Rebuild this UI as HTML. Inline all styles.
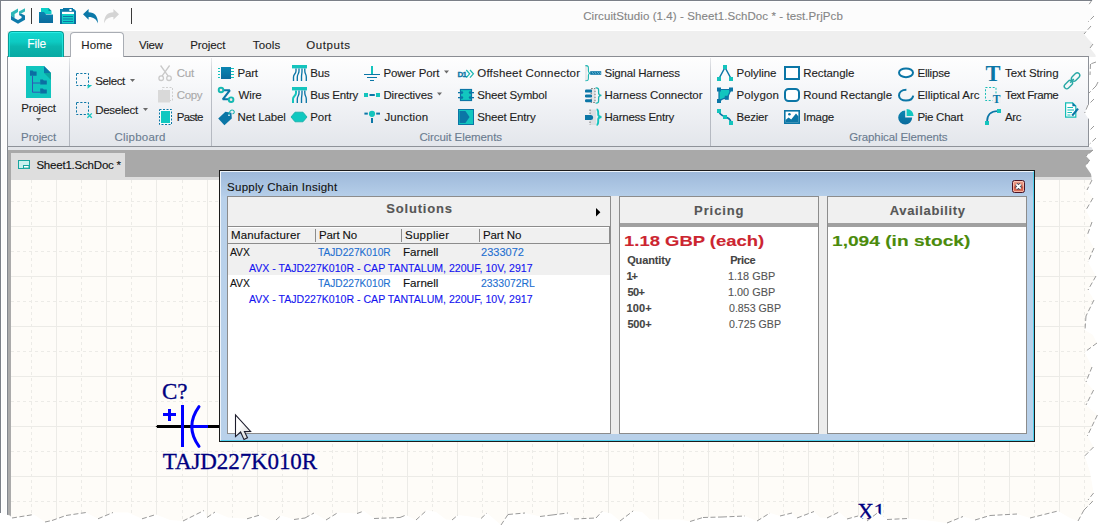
<!DOCTYPE html>
<html lang="en"><head><meta charset="utf-8"><title>CircuitStudio - Supply Chain Insight</title>
<style>
*{box-sizing:border-box;margin:0;padding:0}
html,body{width:1103px;height:528px;overflow:hidden;background:#fff}
body{position:relative;font-family:"Liberation Sans",sans-serif;font-size:11.5px}
.a{position:absolute}
.t{position:absolute;white-space:pre;line-height:30px;font-family:"Liberation Sans",sans-serif;-webkit-text-stroke:0.12px currentColor}
#win{left:0;top:0;width:1103px;height:528px;overflow:hidden}
#bt{left:0;top:0;width:1103px;height:1px;background:#7b8088}
#bl{left:0;top:0;width:1px;height:528px;background:#7b8088}
#titlebar{left:1px;top:1px;width:1102px;height:30px;background:#fcfcfc;border-top:1px solid #fff}
#tabrow{left:7px;top:30px;width:1096px;height:27px;background:linear-gradient(#fff 0,#fff 1px,#efefef 1px,#efefef 100%)}
#lmargin{left:1px;top:31px;width:6px;height:497px;background:#fcfcfc;border-left:1px solid #fff;border-right:1px solid #fff}
#filetab{left:8px;top:31px;width:56px;height:26px;border:1px solid #089c96;border-bottom:0;border-radius:4px 4px 0 0;
 background:linear-gradient(#10d6ce 0,#0dcac2 40%,#0ab6ae 58%,#08aaa3 100%);box-shadow:inset 0 1px 0 #2aeee6,inset 1px 0 0 rgba(42,238,230,.7),inset -1px 0 0 rgba(42,238,230,.7)}
#ribbon{left:7px;top:56px;width:1082px;height:91px;border:1px solid #8e9299;border-top-color:#8a8d93;
 background:linear-gradient(#fefefe 0,#f7f8fa 30%,#eceef2 70%,#e3e6eb 100%)}
#hometab{left:70px;top:32px;width:54px;height:25px;background:#fff;border:1px solid #a9adb4;border-bottom:0;border-radius:4px 4px 0 0}
.sep{width:1px;top:58px;height:88px;background:linear-gradient(rgba(170,175,184,.25),#bcc0c8 25%,#b4b8c0 100%)}
#below{left:8px;top:147px;width:1095px;height:3px;background:#e2e4e8}
#band{left:8px;top:150px;width:1095px;height:30px;background:#a9a9a9}
#lgray{left:7px;top:147px;width:4px;height:381px;background:linear-gradient(to right,#82878e 0,#82878e 1px,#ababab 1px,#ababab 100%)}
#strip{left:11px;top:177px;width:1092px;height:3px;background:#dedede}
#doctab{left:11px;top:153px;width:114px;height:25px;background:#dedede}
#sheet{left:11px;top:180px;width:1092px;height:348px;background:#fefcf8}
/* dialog */
#dlg{left:219px;top:170px;width:816px;height:272px;border:1px solid #1b1b1b;background:linear-gradient(#9db8d9 0,#b4cde8 24px,#b9d1ea 26px,#b9d1ea 100%)}
#dlg .hl{left:0;top:0;width:814px;height:270px;border:1px solid;border-color:#eef4fa #4fd0ee #4fd0ee #eef4fa}
.panel{background:#fff;border:1px solid #8c8c8c}
.phead{left:0;top:0;height:27px;background:#f0f0f0}
.gap{background:#ececec}
#close{left:1012px;top:180px;width:13px;height:13px;border:1px solid #4a1324;border-radius:2.5px;
 background:linear-gradient(#eaa08e 0,#e3826d 48%,#cf4c36 52%,#dd7a66 100%);box-shadow:inset 0 0 0 1px rgba(255,215,200,.65)}

</style></head>
<body>
<div id="win" class="a">
<div id="titlebar" class="a"></div>
<div id="tabrow" class="a"></div>
<div id="lmargin" class="a"></div>
<div id="lgray" class="a"></div>
<div id="below" class="a"></div>
<div id="band" class="a"></div>
<div id="strip" class="a"></div>
<div id="doctab" class="a"></div>
<div id="sheet" class="a"></div>
<svg class="a" style="left:0;top:0" width="1103" height="528" viewBox="0 0 1103 528"><g stroke="#ecebe7" stroke-width="1" shape-rendering="crispEdges"><line x1="31.5" y1="180" x2="31.5" y2="528" stroke-dasharray="3 3"/><line x1="56.5" y1="180" x2="56.5" y2="528"/><line x1="81.5" y1="180" x2="81.5" y2="528" stroke-dasharray="3 3"/><line x1="106.5" y1="180" x2="106.5" y2="528"/><line x1="131.5" y1="180" x2="131.5" y2="528" stroke-dasharray="3 3"/><line x1="156.5" y1="180" x2="156.5" y2="528"/><line x1="182.5" y1="180" x2="182.5" y2="528" stroke-dasharray="3 3"/><line x1="207.5" y1="180" x2="207.5" y2="528"/><line x1="232.5" y1="180" x2="232.5" y2="528" stroke-dasharray="3 3"/><line x1="257.5" y1="180" x2="257.5" y2="528"/><line x1="282.5" y1="180" x2="282.5" y2="528" stroke-dasharray="3 3"/><line x1="307.5" y1="180" x2="307.5" y2="528"/><line x1="332.5" y1="180" x2="332.5" y2="528" stroke-dasharray="3 3"/><line x1="357.5" y1="180" x2="357.5" y2="528"/><line x1="382.5" y1="180" x2="382.5" y2="528" stroke-dasharray="3 3"/><line x1="407.5" y1="180" x2="407.5" y2="528"/><line x1="432.5" y1="180" x2="432.5" y2="528" stroke-dasharray="3 3"/><line x1="457.5" y1="180" x2="457.5" y2="528"/><line x1="482.5" y1="180" x2="482.5" y2="528" stroke-dasharray="3 3"/><line x1="507.5" y1="180" x2="507.5" y2="528"/><line x1="532.5" y1="180" x2="532.5" y2="528" stroke-dasharray="3 3"/><line x1="557.5" y1="180" x2="557.5" y2="528"/><line x1="583.5" y1="180" x2="583.5" y2="528" stroke-dasharray="3 3"/><line x1="608.5" y1="180" x2="608.5" y2="528"/><line x1="633.5" y1="180" x2="633.5" y2="528" stroke-dasharray="3 3"/><line x1="658.5" y1="180" x2="658.5" y2="528"/><line x1="683.5" y1="180" x2="683.5" y2="528" stroke-dasharray="3 3"/><line x1="708.5" y1="180" x2="708.5" y2="528"/><line x1="733.5" y1="180" x2="733.5" y2="528" stroke-dasharray="3 3"/><line x1="758.5" y1="180" x2="758.5" y2="528"/><line x1="783.5" y1="180" x2="783.5" y2="528" stroke-dasharray="3 3"/><line x1="808.5" y1="180" x2="808.5" y2="528"/><line x1="833.5" y1="180" x2="833.5" y2="528" stroke-dasharray="3 3"/><line x1="858.5" y1="180" x2="858.5" y2="528"/><line x1="883.5" y1="180" x2="883.5" y2="528" stroke-dasharray="3 3"/><line x1="908.5" y1="180" x2="908.5" y2="528"/><line x1="933.5" y1="180" x2="933.5" y2="528" stroke-dasharray="3 3"/><line x1="958.5" y1="180" x2="958.5" y2="528"/><line x1="984.5" y1="180" x2="984.5" y2="528" stroke-dasharray="3 3"/><line x1="1009.5" y1="180" x2="1009.5" y2="528"/><line x1="1034.5" y1="180" x2="1034.5" y2="528" stroke-dasharray="3 3"/><line x1="1059.5" y1="180" x2="1059.5" y2="528"/><line x1="1084.5" y1="180" x2="1084.5" y2="528" stroke-dasharray="3 3"/><line x1="11" y1="201.5" x2="1103" y2="201.5" stroke-dasharray="3 3"/><line x1="11" y1="226.5" x2="1103" y2="226.5"/><line x1="11" y1="251.5" x2="1103" y2="251.5" stroke-dasharray="3 3"/><line x1="11" y1="276.5" x2="1103" y2="276.5"/><line x1="11" y1="301.5" x2="1103" y2="301.5" stroke-dasharray="3 3"/><line x1="11" y1="326.5" x2="1103" y2="326.5"/><line x1="11" y1="351.5" x2="1103" y2="351.5" stroke-dasharray="3 3"/><line x1="11" y1="376.5" x2="1103" y2="376.5"/><line x1="11" y1="401.5" x2="1103" y2="401.5" stroke-dasharray="3 3"/><line x1="11" y1="426.5" x2="1103" y2="426.5"/><line x1="11" y1="451.5" x2="1103" y2="451.5" stroke-dasharray="3 3"/><line x1="11" y1="476.5" x2="1103" y2="476.5"/><line x1="11" y1="501.5" x2="1103" y2="501.5" stroke-dasharray="3 3"/><line x1="11" y1="526.5" x2="1103" y2="526.5"/></g></svg>
<div id="ribbon" class="a"></div>
<div id="filetab" class="a"></div>
<div id="hometab" class="a"></div>
<div class="a sep" style="left:69px"></div>
<div class="a sep" style="left:211px"></div>
<div class="a sep" style="left:710px"></div>
<!-- schematic symbol -->
<svg class="a" style="left:0;top:0" width="1103" height="528" viewBox="0 0 1103 528">
 <g shape-rendering="crispEdges">
  <rect x="157" y="425" width="62" height="3" fill="#000"/>
  <rect x="181" y="405" width="3" height="42" fill="#0000ff"/>
  <rect x="192" y="425" width="16" height="3" fill="#0000ff"/>
  <rect x="163" y="413" width="13" height="3" fill="#0000ff"/>
  <rect x="168" y="409" width="3" height="12" fill="#0000ff"/>
 </g>
 <path d="M155.5,426.5 l3,-1.5 v3z" fill="#000"/>
 <path d="M199,406.6 Q184.6,426.5 199,446.4" fill="none" stroke="#0000ff" stroke-width="3" stroke-linecap="round"/>
</svg>
<!-- dialog -->
<div id="dlg" class="a">
 <div class="a hl"></div>
</div>
<div class="a panel" style="left:227px;top:196px;width:384px;height:238px">
 <div class="a phead" style="width:382px;height:30px;border-bottom:1px solid #8c8c8c"></div>
 <div class="a" style="left:0;top:30px;width:382px;height:17px;background:#f0f0f0;border:1px solid #8c8c8c;border-left:0;border-top:0;box-shadow:inset 0 1px 0 #fff"></div>
 <div class="a" style="left:87px;top:32px;width:1px;height:13px;background:#8c8c8c"></div>
 <div class="a" style="left:173px;top:32px;width:1px;height:13px;background:#8c8c8c"></div>
 <div class="a" style="left:251px;top:32px;width:1px;height:13px;background:#8c8c8c"></div>
 <div class="a" style="left:0;top:47px;width:382px;height:31px;background:#f0f0f0"></div>
</div>
<div class="a gap" style="left:611px;top:196px;width:8px;height:238px"></div>
<div class="a panel" style="left:619px;top:196px;width:200px;height:238px">
 <div class="a phead" style="width:198px;height:30px;border-bottom:4px solid #a0a0a0"></div>
</div>
<div class="a gap" style="left:819px;top:196px;width:8px;height:238px"></div>
<div class="a panel" style="left:827px;top:196px;width:200px;height:238px">
 <div class="a phead" style="width:198px;height:30px;border-bottom:4px solid #a0a0a0"></div>
</div>
<div id="close" class="a"></div>
<svg class="a" style="left:0;top:0" width="1103" height="528" viewBox="0 0 1103 528">
<defs><linearGradient id="gb" x1="0" y1="0" x2="0" y2="1"><stop offset="0" stop-color="#0a86b2"/><stop offset="1" stop-color="#0b6a9c"/></linearGradient></defs>
<g><path d="M18,8.6 L18,12 L14.6,14 L14.6,17.8 L11,15.8 L11,12.6Z" fill="#2cb7b8"/><path d="M25,8.2 L25,11.6 L19,14.6 L19,11.4Z" fill="#2cb7b8"/><path d="M11,15.8 L14.6,17.8 L14.6,18.2 L18,20 L21.6,18 L21.6,16.4 L19,15 L19,14.6 L21,13.4 L25,15.6 L25,19.8 L18,23.8 L11,19.8Z" fill="#0d7aaa"/></g>
<rect x="31" y="8" width="1" height="16" fill="#3a3a3a" shape-rendering="crispEdges"/>
<rect x="131" y="8" width="1" height="16" fill="#3a3a3a" shape-rendering="crispEdges"/>
<path d="M41,8 H48.5 L51.5,11 V14 H41Z" fill="#0ccfc8"/><path d="M48.5,8 L51.5,11 H48.5Z" fill="#0b8f9a"/><path d="M39,12 H44 L46,14.5 H53 V23 H39Z" fill="url(#gb)"/>
<path d="M60,9 H74 L76,11 V24 H60Z" fill="url(#gb)"/><rect x="63" y="8" width="10" height="4" fill="#0b76a6"/><rect x="62" y="11.8" width="12" height="2.2" fill="#fff"/><rect x="69.4" y="9" width="2.2" height="2" fill="#fff"/><rect x="62" y="14" width="12" height="9.5" fill="#10cfc7"/><g fill="#0b76a6"><rect x="63" y="16" width="10" height="1"/><rect x="63" y="18.5" width="10" height="1"/><rect x="63" y="21" width="10" height="1"/></g>
<path d="M83,14.3 L88.6,9 V12.2 C94.5,12.2 98,16 98,23.6 C96.5,19.2 93.6,17 88.6,17 V19.8Z" fill="#0b78a8"/>
<path d="M119,14.3 L113.4,9 V12.2 C107.5,12.2 104,16 104,23.6 C105.5,19.2 108.4,17 113.4,17 V19.8Z" fill="#d4d4d4"/>
<path d="M26,66 H44 L51,73 V98 H26Z" fill="#10c5be"/><path d="M44,66 L51,73 H44Z" fill="#0b7aa8"/><path d="M44,73 H51 V80Z" fill="#0aa7a0"/>
<path d="M30,70.6 h2.6 l1,1 h3 v4.2 h-6.6Z" fill="#0b6fa2"/><path d="M40.2,79.4 h2.6 l1,1 h3 v4.2 h-6.6Z" fill="#0b6fa2"/><path d="M40.2,88.4 h2.6 l1,1 h3 v4.2 h-6.6Z" fill="#0b6fa2"/>
<path d="M32.5,76 V92.2 H40 M32.5,83 H40" fill="none" stroke="#2f58b5" stroke-width="1"/>
<path d="M36,118 h5 l-2.5,3Z" fill="#6a6a6a"/><path d="M130,79 h5 l-2.5,3Z" fill="#6a6a6a"/><path d="M143,108 h5 l-2.5,3Z" fill="#6a6a6a"/><path d="M444,70.5 h5 l-2.5,3Z" fill="#6a6a6a"/><path d="M437,92.5 h5 l-2.5,3Z" fill="#6a6a6a"/>
<rect x="76.5" y="73.5" width="12" height="12" fill="none" stroke="#0b76a6" stroke-width="1" stroke-dasharray="2.2 1.6"/><path d="M87.6,85 h4.6 l-4.6,3.8Z" fill="#14c4bd"/>
<rect x="76.5" y="102.5" width="12" height="12" fill="none" stroke="#0b76a6" stroke-width="1" stroke-dasharray="2.2 1.6"/><path d="M87.4,113.4 l4.4,4.4 M91.8,113.4 l-4.4,4.4" stroke="#14c4bd" stroke-width="1.3" fill="none"/>
<g fill="none" stroke="#c9c9c9" stroke-width="1.3"><path d="M160.6,65.5 L168.2,76.2 M169.6,65.5 L162,76.2"/><circle cx="161.2" cy="78.2" r="2.3"/><circle cx="169" cy="78.2" r="2.3"/></g>
<rect x="162.5" y="87.5" width="10" height="13" fill="none" stroke="#cfcfcf" stroke-dasharray="2 1.5"/><rect x="158" y="90" width="12" height="12.5" fill="#d9d9d9"/>
<rect x="159.5" y="109.5" width="12" height="15" fill="#f4fbfb" stroke="#0b76a6" stroke-dasharray="2 1.5"/><rect x="161" y="111" width="9" height="12" fill="#10c8c0"/>
<rect x="221" y="67" width="10" height="12" fill="url(#gb)"/><g fill="#14c4bd" shape-rendering="crispEdges"><rect x="218" y="68" width="2" height="1"/><rect x="231" y="68" width="3" height="1"/><rect x="218" y="71" width="2" height="1"/><rect x="231" y="71" width="3" height="1"/><rect x="218" y="74" width="2" height="1"/><rect x="231" y="74" width="3" height="1"/><rect x="218" y="77" width="2" height="1"/><rect x="231" y="77" width="3" height="1"/></g>
<path d="M223.2,90.3 H229.8 L222.8,99.3 H228.8" fill="none" stroke="#0b76a6" stroke-width="2.1" stroke-linejoin="bevel"/><circle cx="221" cy="90" r="2.3" fill="#f6e4e4" stroke="#13b9b2" stroke-width="1.9"/><circle cx="231.1" cy="99.7" r="2.3" fill="#f6e4e4" stroke="#13b9b2" stroke-width="1.9"/>
<path d="M218.2,118.6 L225.4,111.8 L231.4,112.8 L231.8,118.4 L224.4,125.2Z" fill="#0b76a6"/><circle cx="229" cy="115.2" r="0.9" fill="#dfeef5"/><path d="M229.2,114.6 C228.6,111.4 231.4,109.2 233.4,110.4 C235,111.6 234.2,113.8 232.4,113.8" fill="none" stroke="#19b5b0" stroke-width="1.1"/>
<rect x="292" y="65" width="15" height="3.4" fill="#14c4bd"/><g fill="none" stroke="#0b76a6" stroke-width="1.35"><path d="M296,68.4 V71 C296,74 293.5,74 293.5,77 V81"/><path d="M299,68.4 V71 C299,74 297.3,74 297.3,77 V81"/><path d="M302,68.4 V71 C302,74 301.5,74 301.5,77 V81"/><path d="M304.8,68.4 V71 C304.8,74 306.3,74 306.3,77 V81"/></g><rect x="292" y="87" width="15" height="3.4" fill="#14c4bd"/><g fill="none" stroke="#0b76a6" stroke-width="1.35"><path d="M299,90.4 V93 C299,96 297.3,96 297.3,99 V103"/><path d="M302,90.4 V93 C302,96 301.5,96 301.5,99 V103"/><path d="M304.8,90.4 V93 C304.8,96 306.3,96 306.3,99 V103"/></g><path d="M296,90.4 V93 C296,96 293,96 293,99 V103" fill="none" stroke="#14c4bd" stroke-width="2"/>
<path d="M291,117 L295,112.2 H303 L307,117 L303,121.8 H295Z" fill="#10c8c0" stroke="#12aca6" stroke-width=".8"/>
<rect x="371" y="66" width="2" height="8" fill="#14c4bd"/><g fill="#0b76a6" shape-rendering="crispEdges"><rect x="364" y="74" width="16" height="1.4"/><rect x="367" y="77" width="10" height="1"/><rect x="370" y="80" width="4" height="1"/></g>
<rect x="364" y="93" width="4" height="4" fill="#14c4bd"/><rect x="376" y="93" width="4" height="4" fill="#14c4bd"/><rect x="369.5" y="94" width="5.3" height="2" fill="#0b76a6"/>
<rect x="364.4" y="112.6" width="3.4" height="2" fill="#0b76a6"/><rect x="376.2" y="112.6" width="3.8" height="2" fill="#0b76a6"/><rect x="371" y="118" width="2" height="5" fill="#0b76a6"/><circle cx="372" cy="113.8" r="3.1" fill="#14c4bd"/>
<text x="457.4" y="76.8" font-family="Liberation Sans" font-weight="bold" font-size="8" fill="#0b76a6" stroke="#0b76a6" stroke-width=".3" letter-spacing="-0.7">D1</text><path d="M466.3,70 L469.6,73.8 L466.3,77.6 M470,70 L473.4,73.8 L470,77.6" fill="none" stroke="#19b5b0" stroke-width="1.2"/>
<rect x="460.5" y="89.5" width="11" height="11" fill="#12c6bf" stroke="#0b76a6" stroke-width="1.2"/><g fill="#0b76a6"><rect x="458" y="92" width="2.5" height="1.3"/><rect x="458" y="97" width="2.5" height="1.3"/><rect x="471.5" y="92" width="2.5" height="1.3"/><rect x="471.5" y="97" width="2.5" height="1.3"/><circle cx="461.8" cy="92.6" r="1.4"/><circle cx="461.8" cy="97.6" r="1.4"/><circle cx="470.2" cy="92.6" r="1.4"/><circle cx="470.2" cy="97.6" r="1.4"/></g>
<rect x="458.5" y="109.5" width="15" height="15" fill="#12c6bf" stroke="#0b76a6" stroke-width="1"/><path d="M459.5,111 H465.4 L469.6,117 L465.4,123 H459.5Z" fill="#0b76a6"/>
<path d="M585,65.6 h2.2 v15 h-2.2z" fill="#e6e8ea"/><path d="M585.4,65.6 C588.6,65.4 588.4,67 588.4,69 V71 C588.4,72.4 589,73 590.2,73.2 C589,73.4 588.4,74 588.4,75.4 V77.4 C588.4,79.6 588.6,80.8 585.4,80.8" fill="none" stroke="#19b5b0" stroke-width="1.1"/><rect x="590.2" y="71.2" width="11" height="3.6" fill="#0b76a6"/><path d="M592,72 l1.6,2 M594.6,72 l1.6,2 M597.2,72 l1.6,2 M599.6,72 l1.4,2" stroke="#7fc4dc" stroke-width=".9"/>
<rect x="591.2" y="88.5" width="3.8" height="14" fill="#e2e4e6" stroke="#555" stroke-width=".8" stroke-dasharray="1.5 1.5"/><g fill="#0b76a6"><rect x="585" y="89.6" width="7" height="3" rx="1.2"/><rect x="585" y="94.4" width="7" height="3" rx="1.2"/><rect x="585" y="99.2" width="7" height="3" rx="1.2"/></g><path d="M595.6,87.8 C598.8,87.6 598.6,89.4 598.6,91.4 V93 C598.6,94.6 599.6,95.2 601.4,95.4 C599.6,95.6 598.6,96.2 598.6,97.8 V99.6 C598.6,101.8 598.8,103.2 595.6,103.2" fill="none" stroke="#19b5b0" stroke-width="1.3"/>
<rect x="590" y="109.5" width="6" height="15.5" fill="#dddfe2"/><path d="M590,109.5 V125" stroke="#555" stroke-width=".8" stroke-dasharray="1.5 1.5"/><path d="M585,115 h5.6 a2.5,2.5 0 0 1 0,5 h-5.6z" fill="#0b76a6"/><path d="M596.6,109.4 C598.2,109.6 598.2,110.8 598.2,112.6 V114.6 C598.2,116.2 599.6,116.8 601.4,117 C599.6,117.2 598.2,117.8 598.2,119.4 V121.6 C598.2,123.6 598.2,124.8 596.6,125" fill="none" stroke="#14c4bd" stroke-width="1.9"/>
<path d="M719,78.5 L725,67.5 L731,78.5" fill="none" stroke="#0b76a6" stroke-width="1.5"/><rect x="723" y="65" width="4" height="4" fill="#14c4bd"/><rect x="717" y="77" width="4" height="4" fill="#14c4bd"/><rect x="729" y="77" width="4" height="4" fill="#14c4bd"/>
<path d="M719,89.5 H731 L727.4,97.6 C724,98 721,99.4 719,101.4Z" fill="#12c6bf" stroke="#0b76a6" stroke-width="1.2"/><rect x="717" y="87.5" width="4" height="4" fill="#0b76a6"/><rect x="729" y="87.5" width="4" height="4" fill="#0b76a6"/><rect x="717" y="99" width="4" height="4" fill="#0b76a6"/><rect x="724.8" y="95.8" width="4" height="4" fill="#0b76a6"/>
<path d="M719,111 C719,118 731,115 731,123" fill="none" stroke="#0b76a6" stroke-width="1.6"/><rect x="717" y="109" width="4" height="4" fill="#14c4bd"/><rect x="723" y="115" width="4" height="4" fill="#14c4bd"/><rect x="729" y="121" width="4" height="4" fill="#14c4bd"/>
<rect x="785" y="67" width="14" height="12" fill="#fff" stroke="#0b76a6" stroke-width="2"/>
<rect x="785" y="89" width="14" height="12" rx="3.5" fill="#fff" stroke="#0b76a6" stroke-width="2"/>
<rect x="784.8" y="110.8" width="14.4" height="12.4" fill="#fff" stroke="#0b76a6" stroke-width="1.6"/><path d="M785.5,122.6 V120 L788.6,117.6 L791.2,119.6 L796,113.6 L798.5,116.4 V122.6Z" fill="#0b76a6"/><circle cx="789.4" cy="114.2" r="1.3" fill="#0b76a6"/>
<ellipse cx="906" cy="72.8" rx="7" ry="4.4" fill="#fff" stroke="#0b76a6" stroke-width="2"/>
<path d="M906.4,89.8 C901.6,89.8 899,92.6 899,95.6 C899,98.6 902,100.6 906,100.6 C910,100.6 912.8,98.6 913.2,95.6" fill="none" stroke="#0b76a6" stroke-width="2"/>
<path d="M905.2,110.6 A7,7 0 1 0 912.2,117.6 H905.2Z" fill="url(#gb)"/><path d="M906.6,109 A7,7 0 0 1 913.6,116 H906.6Z" fill="#12c6bf"/>
<text x="985.6" y="81" font-family="Liberation Serif" font-weight="bold" font-size="22.5" fill="#0b76a6">T</text>
<rect x="985.5" y="87.5" width="10.5" height="13" fill="none" stroke="#19bdb6" stroke-width="1" stroke-dasharray="2 1.6"/><rect x="992.4" y="94.4" width="8.6" height="9" fill="#eef0f3"/><text x="992.8" y="103" font-family="Liberation Serif" font-weight="bold" font-size="11.5" fill="#0b76a6">T</text>
<path d="M987,122 Q987,111 998,111" fill="none" stroke="#0b76a6" stroke-width="1.7"/><rect x="997" y="109" width="4" height="4" fill="#14c4bd"/><rect x="985" y="121" width="4" height="4" fill="#14c4bd"/>
<g fill="none" stroke="#2aa9a6" stroke-width="1.4"><rect x="-4.8" y="-2.5" width="9.6" height="5" rx="2.5" transform="translate(1075.6,77) rotate(-45)"/><rect x="-4.8" y="-2.5" width="9.6" height="5" rx="2.5" transform="translate(1068.4,84.6) rotate(-45)"/><path d="M1070.2,82.8 L1073.8,79" stroke-width="1.6"/></g>
<path d="M1065.6,102.8 H1072.6 L1075.8,106 V117.2 H1065.6Z" fill="#fff" stroke="#14bdb6" stroke-width="1.2"/><path d="M1072.4,102.4 L1076.2,106.2 H1072.4Z" fill="#0b76a6"/><g stroke="#14bdb6" stroke-width="1"><path d="M1067.4,107.5 H1073 M1067.4,110 H1074 M1067.4,112.5 H1072 M1067.4,115 H1070.5"/></g><path d="M1078,108.6 L1072.2,115.6" stroke="#0b76a6" stroke-width="2.2"/>
<rect x="18.5" y="160.5" width="11" height="8" fill="#c9f0ee" stroke="#17a59f" stroke-width="1"/><rect x="23.5" y="165.5" width="5.5" height="2.6" fill="#fff" stroke="#17a59f" stroke-width="1"/>
<path d="M596,208 L600.4,212.2 L596,216.4Z" fill="#000"/>
<path d="M1016.3,184.4 L1020.7,188.6 M1020.7,184.4 L1016.3,188.6" stroke="#454a58" stroke-width="3.6" stroke-linecap="butt"/><path d="M1016.3,184.4 L1020.7,188.6 M1020.7,184.4 L1016.3,188.6" stroke="#fff" stroke-width="1.9" stroke-linecap="butt"/>
<defs><linearGradient id="gc" x1="0" y1="0" x2="1" y2="1"><stop offset="0.35" stop-color="#fff"/><stop offset="1" stop-color="#cfcfcf"/></linearGradient></defs><path d="M235.5,415 L235.5,436.6 L240.6,432 L244,439.6 L247.5,437.8 L244.4,431.6 L250.6,431.4Z" fill="url(#gc)" stroke="#1c1c2c" stroke-width="1.1" stroke-linejoin="miter"/>
</svg>
<span class="t" style="left:583.2px;top:1px;font-size:11.5px;color:#858585;letter-spacing:0.080px;">CircuitStudio (1.4) - Sheet1.SchDoc * - test.PrjPcb</span>
<span class="t" style="left:27.3px;top:29px;font-size:12px;color:#ffffff;letter-spacing:-0.133px;">File</span>
<span class="t" style="left:81.2px;top:30px;font-size:11.5px;color:#1e1e1e;letter-spacing:0.133px;">Home</span>
<span class="t" style="left:139.0px;top:30px;font-size:11.5px;color:#1e1e1e;letter-spacing:-0.200px;">View</span>
<span class="t" style="left:190.2px;top:30px;font-size:11.5px;color:#1e1e1e;letter-spacing:-0.100px;">Project</span>
<span class="t" style="left:252.8px;top:30px;font-size:11.5px;color:#1e1e1e;letter-spacing:0.125px;">Tools</span>
<span class="t" style="left:306.2px;top:30px;font-size:11.5px;color:#1e1e1e;letter-spacing:0.583px;">Outputs</span>
<span class="t" style="left:21.3px;top:93px;font-size:11.5px;color:#1e1e1e;letter-spacing:-0.200px;">Project</span>
<span class="t" style="left:95.2px;top:66px;font-size:11.5px;color:#1e1e1e;letter-spacing:-0.380px;">Select</span>
<span class="t" style="left:95.2px;top:95px;font-size:11.5px;color:#1e1e1e;letter-spacing:-0.257px;">Deselect</span>
<span class="t" style="left:176.8px;top:58px;font-size:11.5px;color:#a9a9a9;letter-spacing:-0.250px;">Cut</span>
<span class="t" style="left:176.8px;top:80px;font-size:11.5px;color:#a9a9a9;letter-spacing:-0.400px;">Copy</span>
<span class="t" style="left:176.8px;top:102px;font-size:11.5px;color:#1e1e1e;letter-spacing:-0.675px;">Paste</span>
<span class="t" style="left:237.6px;top:58px;font-size:11.5px;color:#1e1e1e;letter-spacing:-0.267px;">Part</span>
<span class="t" style="left:238.6px;top:80px;font-size:11.5px;color:#1e1e1e;letter-spacing:-0.167px;">Wire</span>
<span class="t" style="left:237.6px;top:102px;font-size:11.5px;color:#1e1e1e;letter-spacing:-0.138px;">Net Label</span>
<span class="t" style="left:310.2px;top:58px;font-size:11.5px;color:#1e1e1e;letter-spacing:-0.100px;">Bus</span>
<span class="t" style="left:310.2px;top:80px;font-size:11.5px;color:#1e1e1e;letter-spacing:-0.212px;">Bus Entry</span>
<span class="t" style="left:310.2px;top:102px;font-size:11.5px;color:#1e1e1e;letter-spacing:0.000px;">Port</span>
<span class="t" style="left:383.4px;top:58px;font-size:11.5px;color:#1e1e1e;letter-spacing:-0.089px;">Power Port</span>
<span class="t" style="left:383.4px;top:80px;font-size:11.5px;color:#1e1e1e;letter-spacing:-0.133px;">Directives</span>
<span class="t" style="left:384.4px;top:102px;font-size:11.5px;color:#1e1e1e;letter-spacing:0.129px;">Junction</span>
<span class="t" style="left:477.3px;top:58px;font-size:11.5px;color:#1e1e1e;letter-spacing:0.188px;">Offsheet Connector</span>
<span class="t" style="left:477.3px;top:80px;font-size:11.5px;color:#1e1e1e;letter-spacing:-0.164px;">Sheet Symbol</span>
<span class="t" style="left:477.3px;top:102px;font-size:11.5px;color:#1e1e1e;letter-spacing:-0.170px;">Sheet Entry</span>
<span class="t" style="left:604.5px;top:58px;font-size:11.5px;color:#1e1e1e;letter-spacing:-0.200px;">Signal Harness</span>
<span class="t" style="left:604.5px;top:80px;font-size:11.5px;color:#1e1e1e;letter-spacing:-0.069px;">Harness Connector</span>
<span class="t" style="left:604.5px;top:102px;font-size:11.5px;color:#1e1e1e;letter-spacing:-0.258px;">Harness Entry</span>
<span class="t" style="left:736.5px;top:58px;font-size:11.5px;color:#1e1e1e;letter-spacing:-0.043px;">Polyline</span>
<span class="t" style="left:736.5px;top:80px;font-size:11.5px;color:#1e1e1e;letter-spacing:0.133px;">Polygon</span>
<span class="t" style="left:736.5px;top:102px;font-size:11.5px;color:#1e1e1e;letter-spacing:-0.200px;">Bezier</span>
<span class="t" style="left:803.3px;top:58px;font-size:11.5px;color:#1e1e1e;letter-spacing:-0.100px;">Rectangle</span>
<span class="t" style="left:803.3px;top:80px;font-size:11.5px;color:#1e1e1e;letter-spacing:-0.007px;">Round Rectangle</span>
<span class="t" style="left:803.3px;top:102px;font-size:11.5px;color:#1e1e1e;letter-spacing:-0.275px;">Image</span>
<span class="t" style="left:917.4px;top:58px;font-size:11.5px;color:#1e1e1e;letter-spacing:-0.183px;">Ellipse</span>
<span class="t" style="left:917.4px;top:80px;font-size:11.5px;color:#1e1e1e;letter-spacing:0.015px;">Elliptical Arc</span>
<span class="t" style="left:917.4px;top:102px;font-size:11.5px;color:#1e1e1e;letter-spacing:-0.275px;">Pie Chart</span>
<span class="t" style="left:1005.1px;top:58px;font-size:11.5px;color:#1e1e1e;letter-spacing:-0.090px;">Text String</span>
<span class="t" style="left:1005.1px;top:80px;font-size:11.5px;color:#1e1e1e;letter-spacing:-0.433px;">Text Frame</span>
<span class="t" style="left:1005.1px;top:102px;font-size:11.5px;color:#1e1e1e;letter-spacing:-0.450px;">Arc</span>
<span class="t" style="left:21.1px;top:122px;font-size:11.5px;color:#6b7c90;letter-spacing:-0.117px;">Project</span>
<span class="t" style="left:114.4px;top:122px;font-size:11.5px;color:#6b7c90;letter-spacing:0.238px;">Clipboard</span>
<span class="t" style="left:419.4px;top:122px;font-size:11.5px;color:#6b7c90;letter-spacing:-0.073px;">Circuit Elements</span>
<span class="t" style="left:849.3px;top:122px;font-size:11.5px;color:#6b7c90;letter-spacing:-0.124px;">Graphical Elements</span>
<span class="t" style="left:36.4px;top:150px;font-size:11.5px;color:#111111;letter-spacing:-0.207px;">Sheet1.SchDoc *</span>
<span class="t" style="left:227.1px;top:172px;font-size:11.5px;color:#111111;letter-spacing:0.242px;">Supply Chain Insight</span>
<span class="t" style="left:386.3px;top:194px;font-size:13px;color:#565656;letter-spacing:0.800px;font-weight:bold;">Solutions</span>
<span class="t" style="left:694.1px;top:196px;font-size:13px;color:#565656;letter-spacing:0.900px;font-weight:bold;">Pricing</span>
<span class="t" style="left:889.8px;top:196px;font-size:13px;color:#565656;letter-spacing:0.636px;font-weight:bold;">Availability</span>
<span class="t" style="left:231.0px;top:220px;font-size:11.5px;color:#111;letter-spacing:0.145px;">Manufacturer</span>
<span class="t" style="left:319.1px;top:220px;font-size:11.5px;color:#111;letter-spacing:-0.167px;">Part No</span>
<span class="t" style="left:405.0px;top:220px;font-size:11.5px;color:#111;letter-spacing:0.257px;">Supplier</span>
<span class="t" style="left:482.9px;top:220px;font-size:11.5px;color:#111;letter-spacing:-0.067px;">Part No</span>
<span class="t" style="left:229.6px;top:237px;font-size:11px;color:#111;transform:scaleX(0.9381);transform-origin:0 0;">AVX</span>
<span class="t" style="left:318.2px;top:237px;font-size:11px;color:#1e6fd0;transform:scaleX(0.9231);transform-origin:0 0;">TAJD227K010R</span>
<span class="t" style="left:402.5px;top:237px;font-size:11px;color:#111;transform:scaleX(1.0531);transform-origin:0 0;">Farnell</span>
<span class="t" style="left:480.8px;top:237px;font-size:11px;color:#1e6fd0;transform:scaleX(1.0024);transform-origin:0 0;">2333072</span>
<span class="t" style="left:248.6px;top:253px;font-size:11px;color:#1414f0;transform:scaleX(0.9603);transform-origin:0 0;">AVX - TAJD227K010R - CAP TANTALUM, 220UF, 10V, 2917</span>
<span class="t" style="left:229.6px;top:268px;font-size:11px;color:#111;transform:scaleX(0.9381);transform-origin:0 0;">AVX</span>
<span class="t" style="left:318.2px;top:268px;font-size:11px;color:#1e6fd0;transform:scaleX(0.9231);transform-origin:0 0;">TAJD227K010R</span>
<span class="t" style="left:402.5px;top:268px;font-size:11px;color:#111;transform:scaleX(1.0531);transform-origin:0 0;">Farnell</span>
<span class="t" style="left:480.9px;top:268px;font-size:11px;color:#1e6fd0;transform:scaleX(0.9464);transform-origin:0 0;">2333072RL</span>
<span class="t" style="left:248.6px;top:284px;font-size:11px;color:#1414f0;transform:scaleX(0.9603);transform-origin:0 0;">AVX - TAJD227K010R - CAP TANTALUM, 220UF, 10V, 2917</span>
<span class="t" style="left:623.8px;top:226px;font-size:15.5px;color:#cc2530;transform:scaleX(1.1905);transform-origin:0 0;font-weight:bold;">1.18 GBP (each)</span>
<span class="t" style="left:831.6px;top:226px;font-size:15.5px;color:#4b8b0b;transform:scaleX(1.2355);transform-origin:0 0;font-weight:bold;">1,094 (in stock)</span>
<span class="t" style="left:627.2px;top:245px;font-size:11px;color:#444;letter-spacing:-0.129px;font-weight:bold;">Quantity</span>
<span class="t" style="left:730.2px;top:245px;font-size:11px;color:#444;letter-spacing:-0.400px;font-weight:bold;">Price</span>
<span class="t" style="left:626.4px;top:261px;font-size:11px;color:#444;letter-spacing:-0.900px;font-weight:bold;">1+</span>
<span class="t" style="left:728.4px;top:261px;font-size:11px;color:#555;transform:scaleX(0.9891);transform-origin:0 0;">1.18 GBP</span>
<span class="t" style="left:627.4px;top:277px;font-size:11px;color:#444;letter-spacing:-0.550px;font-weight:bold;">50+</span>
<span class="t" style="left:728.4px;top:277px;font-size:11px;color:#555;transform:scaleX(0.9891);transform-origin:0 0;">1.00 GBP</span>
<span class="t" style="left:626.4px;top:293px;font-size:11px;color:#444;letter-spacing:0.133px;font-weight:bold;">100+</span>
<span class="t" style="left:729.4px;top:293px;font-size:11px;color:#555;transform:scaleX(0.9660);transform-origin:0 0;">0.853 GBP</span>
<span class="t" style="left:627.4px;top:309px;font-size:11px;color:#444;letter-spacing:-0.200px;font-weight:bold;">500+</span>
<span class="t" style="left:729.4px;top:309px;font-size:11px;color:#555;transform:scaleX(0.9660);transform-origin:0 0;">0.725 GBP</span>
<span class="t" style="left:162.0px;top:377px;font-size:23px;color:#000080;letter-spacing:-0.200px;font-family:'Liberation Serif',serif;-webkit-text-stroke:0.3px currentColor;">C?</span>
<span class="t" style="left:162.8px;top:447px;font-size:23px;color:#000080;letter-spacing:-0.091px;font-family:'Liberation Serif',serif;-webkit-text-stroke:0.3px currentColor;">TAJD227K010R</span>
<span class="t" style="left:857.2px;top:497px;font-size:23px;color:#000080;letter-spacing:-0.400px;font-family:'Liberation Serif',serif;-webkit-text-stroke:0.3px currentColor;">X1</span>
<svg class="a" style="left:0;top:0" width="1103" height="528" viewBox="0 0 1103 528">
<polygon fill="#ffffff" points="0,528 0,513 10,515.5 12,518 34,514.5 45,522 52,520.5 66,515.5 86,512.5 98,518.8 113,512.5 128,512.5 142,518.8 156,514.5 170,520 183,521 204,510.5 207,517.5 215,512 228,517.5 247,518.8 260,515 270,520 276,520 281,515.5 294,519.5 305,518 314,513 326,520 338,512.5 357,513.5 364,511 374,518.5 400,517.5 406,515 416,520 427,510 436,512 446,519.5 452,520 458,515 470,516.5 481,518.5 487,513 501,525 508,514.5 525,513 540,516.5 552,515 568,513 574,519 596,518 602,511.5 611,513.5 620,521 633,511 642,512 650,519.5 680,519.5 690,521.5 703,517.5 722,517 745,516 757,521 770,513 780,516 792,513 797,518 814,511.5 820,517.5 827,518 839,512 847,519 858,516 867,521 878,512.5 887,519.5 908,518.5 928,520.5 947,523 963,516.5 975,520 990,515.5 1017,514 1030,518 1058,511 1070,518 1078,521 1084,510 1094,500 1088,500 1093.6,493 1090,472 1084.7,456 1093.6,447 1087.3,436 1097.4,415 1086,405 1093.6,390 1086,382 1092,367 1084.7,352 1097,343 1093,335 1085,330 1086,316 1094,300 1088,290 1096,276 1088,262 1094,248 1087,236 1092,222 1086,210 1093,198 1087,190 1092,180 1091,174 1085.5,166 1089.7,160 1086,156 1093,150 1089.7,144 1096,138 1089,131 1094,126 1088,118 1084.7,113 1088,105 1094,99 1089,93 1096,86 1098,82 1090,75 1090.5,64 1096,62 1095.5,55 1090,48 1093,44 1089,40 1084,34 1091,26 1088,22 1094,16 1092,10 1088,6 1092,0 1103,0 1103,528"/><g stroke="#8e8e8e" stroke-width="0.9" stroke-dasharray="5 2.5" fill="none"><line x1="12" y1="518" x2="34" y2="514.5"/><line x1="45" y1="522" x2="52" y2="520.5"/><line x1="52" y1="520.5" x2="66" y2="515.5"/><line x1="66" y1="515.5" x2="86" y2="512.5"/><line x1="98" y1="518.8" x2="113" y2="512.5"/><line x1="142" y1="518.8" x2="156" y2="514.5"/><line x1="183" y1="521" x2="204" y2="510.5"/><line x1="207" y1="517.5" x2="215" y2="512"/><line x1="247" y1="518.8" x2="260" y2="515"/><line x1="276" y1="520" x2="281" y2="515.5"/><line x1="294" y1="519.5" x2="305" y2="518"/><line x1="305" y1="518" x2="314" y2="513"/><line x1="326" y1="520" x2="338" y2="512.5"/><line x1="357" y1="513.5" x2="364" y2="511"/><line x1="374" y1="518.5" x2="400" y2="517.5"/><line x1="400" y1="517.5" x2="406" y2="515"/><line x1="416" y1="520" x2="427" y2="510"/><line x1="452" y1="520" x2="458" y2="515"/><line x1="481" y1="518.5" x2="487" y2="513"/><line x1="501" y1="525" x2="508" y2="514.5"/><line x1="508" y1="514.5" x2="525" y2="513"/><line x1="540" y1="516.5" x2="552" y2="515"/><line x1="552" y1="515" x2="568" y2="513"/><line x1="574" y1="519" x2="596" y2="518"/><line x1="596" y1="518" x2="602" y2="511.5"/><line x1="620" y1="521" x2="633" y2="511"/><line x1="690" y1="521.5" x2="703" y2="517.5"/><line x1="703" y1="517.5" x2="722" y2="517"/><line x1="722" y1="517" x2="745" y2="516"/><line x1="757" y1="521" x2="770" y2="513"/><line x1="780" y1="516" x2="792" y2="513"/><line x1="797" y1="518" x2="814" y2="511.5"/><line x1="827" y1="518" x2="839" y2="512"/><line x1="847" y1="519" x2="858" y2="516"/><line x1="867" y1="521" x2="878" y2="512.5"/><line x1="887" y1="519.5" x2="908" y2="518.5"/><line x1="947" y1="523" x2="963" y2="516.5"/><line x1="975" y1="520" x2="990" y2="515.5"/><line x1="990" y1="515.5" x2="1017" y2="514"/><line x1="1030" y1="518" x2="1058" y2="511"/><line x1="1078" y1="521" x2="1084" y2="510"/><line x1="1084" y1="510" x2="1094" y2="500"/><line x1="1092" y1="0" x2="1088" y2="6"/><line x1="1094" y1="16" x2="1088" y2="22"/><line x1="1091" y1="26" x2="1084" y2="34"/><line x1="1093" y1="44" x2="1090" y2="48"/><line x1="1096" y1="62" x2="1090.5" y2="64"/><line x1="1090.5" y1="64" x2="1090" y2="75"/><line x1="1098" y1="82" x2="1096" y2="86"/><line x1="1096" y1="86" x2="1089" y2="93"/><line x1="1094" y1="99" x2="1088" y2="105"/><line x1="1088" y1="105" x2="1084.7" y2="113"/><line x1="1094" y1="126" x2="1089" y2="131"/><line x1="1096" y1="138" x2="1089.7" y2="144"/><line x1="1093" y1="150" x2="1086" y2="156"/><line x1="1089.7" y1="160" x2="1085.5" y2="166"/><line x1="1092" y1="180" x2="1087" y2="190"/><line x1="1093" y1="198" x2="1086" y2="210"/><line x1="1092" y1="222" x2="1087" y2="236"/><line x1="1094" y1="248" x2="1088" y2="262"/><line x1="1096" y1="276" x2="1088" y2="290"/><line x1="1094" y1="300" x2="1086" y2="316"/><line x1="1086" y1="316" x2="1085" y2="330"/><line x1="1097" y1="343" x2="1084.7" y2="352"/><line x1="1092" y1="367" x2="1086" y2="382"/><line x1="1093.6" y1="390" x2="1086" y2="405"/><line x1="1097.4" y1="415" x2="1087.3" y2="436"/><line x1="1093.6" y1="447" x2="1084.7" y2="456"/><line x1="1093.6" y1="493" x2="1088" y2="500"/></g>
</svg>
<div id="bt" class="a" style="width:1092px"></div>
<div id="bl" class="a" style="height:513px"></div>
</div>

</body></html>
